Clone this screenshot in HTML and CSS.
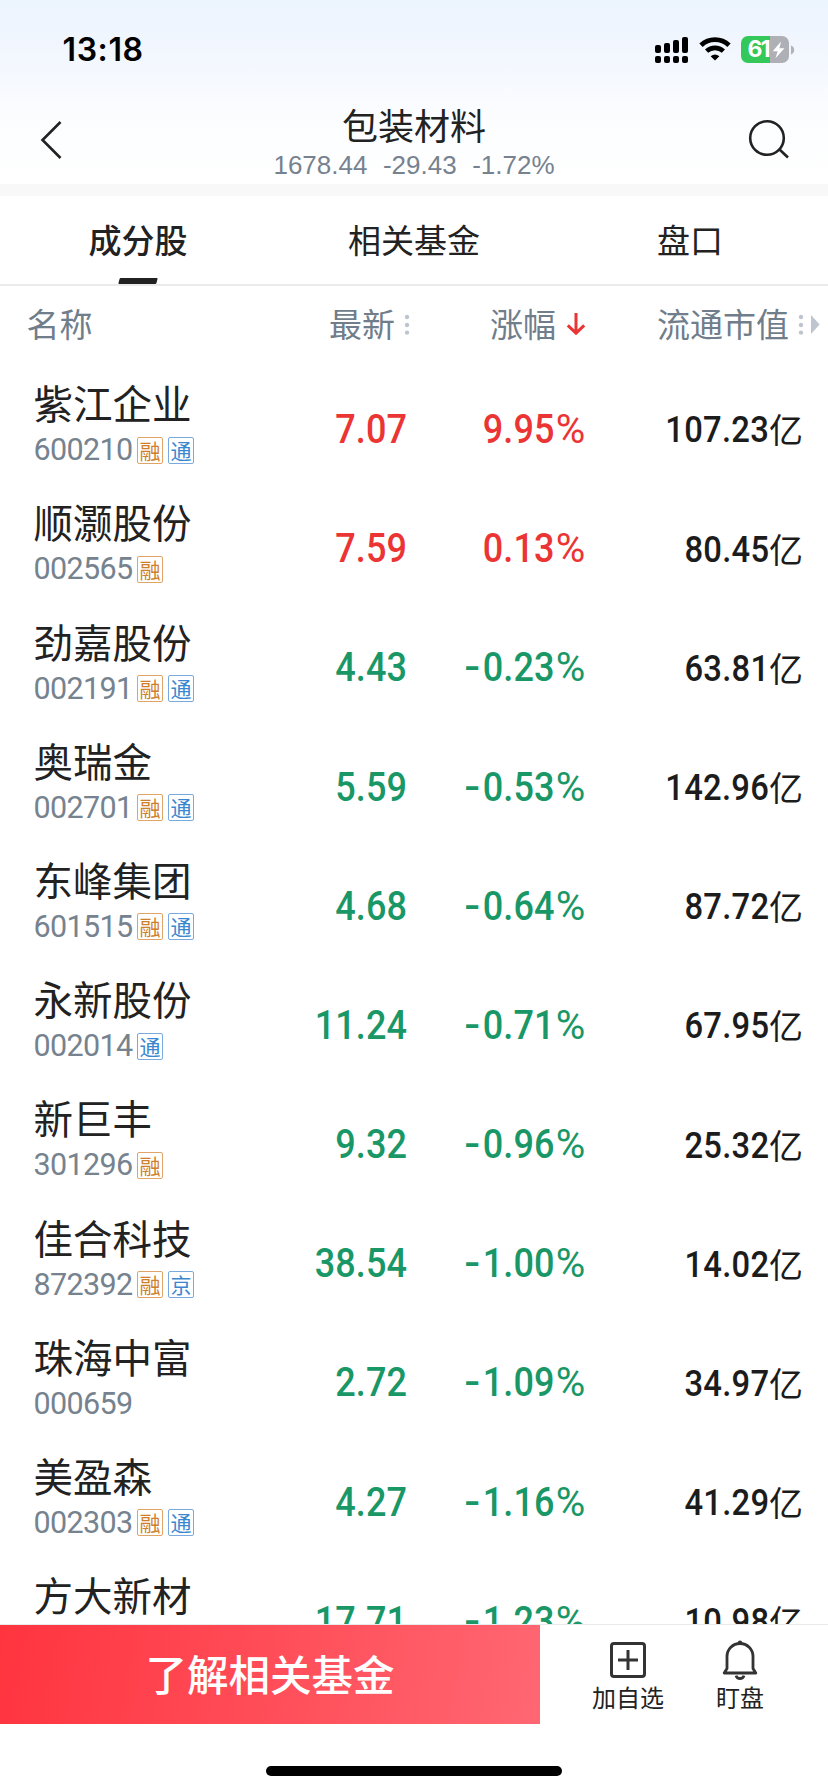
FILE: index.html
```html
<!DOCTYPE html>
<html lang="zh-CN">
<head>
<meta charset="utf-8">
<title>包装材料</title>
<link rel="stylesheet" href="styles.css">
</head>
<body>
<div class="app">
  <header class="top">
    <div class="status">
      <div class="time">13:18</div>
      <div class="status-icons">
        <svg class="signal" width="34" height="27" viewBox="0 0 34 27">
          <rect x="0" y="8" width="6" height="8" rx="2"/><rect x="9" y="6" width="6" height="10" rx="2"/><rect x="18" y="3" width="6" height="13" rx="2"/><rect x="27" y="0" width="6" height="16" rx="2"/>
          <rect x="0" y="19" width="6" height="7" rx="2"/><rect x="9" y="19" width="6" height="7" rx="2"/><rect x="18" y="19" width="6" height="7" rx="2"/><rect x="27" y="19" width="6" height="7" rx="2"/>
        </svg>
        <svg class="wifi" width="32" height="24" viewBox="0 0 32 24">
          <path d="M2 8.2A20.2 20.2 0 0 1 30 8.2" fill="none" stroke="#000" stroke-width="4.8"/>
          <path d="M7.6 14.2A12.2 12.2 0 0 1 24.4 14.2" fill="none" stroke="#000" stroke-width="4.6"/>
          <path d="M16 23.6L11.6 19.2Q16 15.6 20.4 19.2Z"/>
        </svg>
        <div class="battery">
          <span class="battery-level">61</span>
          <svg class="bolt" width="13" height="18" viewBox="0 0 12 18" preserveAspectRatio="none"><path d="M8.4 0.5L0.6 10.2H5.2L3.2 17.3L11.5 7.3H6.8Z" fill="#fff"/></svg>
        </div>
        <svg class="battery-tip" width="4" height="10" viewBox="0 0 4 10"><path d="M0 0.5Q3.2 1.6 3.2 5T0 9.5Z" fill="#b0b2b8"/></svg>
      </div>
    </div>
    <div class="nav">
      <svg class="back" width="24" height="40" viewBox="0 0 24 40"><path d="M20.5 2L2.5 20L20.5 38" fill="none" stroke="#222" stroke-width="2.6"/></svg>
      <div class="heading">
        <h1 class="title">包装材料</h1>
        <div class="quote"><span>1678.44</span><span>-29.43</span><span>-1.72%</span></div>
      </div>
      <svg class="search" width="42" height="42" viewBox="0 0 42 42"><g fill="none" stroke="#222" stroke-width="2.6"><circle cx="19" cy="19" r="16.8"/><path d="M31 30L40 38.5"/></g></svg>
    </div>
  </header>
  <nav class="tabs">
    <div class="tab tab-active">成分股</div>
    <div class="tab">相关基金</div>
    <div class="tab">盘口</div>
  </nav>
  <main class="table">
    <div class="thead">
      <div class="th th-name">名称</div>
      <div class="th">最新<svg class="dots" width="6" height="22" viewBox="0 0 6 22"><circle cx="3" cy="3" r="2.2"/><circle cx="3" cy="11" r="2.2"/><circle cx="3" cy="18.6" r="2.2"/></svg></div>
      <div class="th">涨幅<svg class="arrow" width="20" height="24" viewBox="0 0 20 24"><path d="M10 1V21M1.8 13.4L10 21.2L18.2 13.4" fill="none" stroke="#eb3434" stroke-width="3"/></svg></div>
      <div class="th">流通市值<svg class="dots" width="6" height="22" viewBox="0 0 6 22"><circle cx="3" cy="3" r="2.2"/><circle cx="3" cy="11" r="2.2"/><circle cx="3" cy="18.6" r="2.2"/></svg><svg class="more" width="9" height="19" viewBox="0 0 9 19"><path d="M0 0L8.6 9.5L0 19Z" fill="#bfc5ce"/></svg></div>
    </div>
    <div class="row up"><div class="stock"><div class="name">紫江企业</div><div class="meta"><span class="code">600210</span><i class="tag">融</i><i class="tag blue">通</i></div></div><div class="num">7.07</div><div class="num">9.95<span class="pct">%</span></div><div class="cap"><span class="amount">107.23</span>亿</div></div>
    <div class="row up"><div class="stock"><div class="name">顺灏股份</div><div class="meta"><span class="code">002565</span><i class="tag">融</i></div></div><div class="num">7.59</div><div class="num">0.13<span class="pct">%</span></div><div class="cap"><span class="amount">80.45</span>亿</div></div>
    <div class="row"><div class="stock"><div class="name">劲嘉股份</div><div class="meta"><span class="code">002191</span><i class="tag">融</i><i class="tag blue">通</i></div></div><div class="num">4.43</div><div class="num"><span class="minus">-</span>0.23<span class="pct">%</span></div><div class="cap"><span class="amount">63.81</span>亿</div></div>
    <div class="row"><div class="stock"><div class="name">奥瑞金</div><div class="meta"><span class="code">002701</span><i class="tag">融</i><i class="tag blue">通</i></div></div><div class="num">5.59</div><div class="num"><span class="minus">-</span>0.53<span class="pct">%</span></div><div class="cap"><span class="amount">142.96</span>亿</div></div>
    <div class="row"><div class="stock"><div class="name">东峰集团</div><div class="meta"><span class="code">601515</span><i class="tag">融</i><i class="tag blue">通</i></div></div><div class="num">4.68</div><div class="num"><span class="minus">-</span>0.64<span class="pct">%</span></div><div class="cap"><span class="amount">87.72</span>亿</div></div>
    <div class="row"><div class="stock"><div class="name">永新股份</div><div class="meta"><span class="code">002014</span><i class="tag blue">通</i></div></div><div class="num">11.24</div><div class="num"><span class="minus">-</span>0.71<span class="pct">%</span></div><div class="cap"><span class="amount">67.95</span>亿</div></div>
    <div class="row"><div class="stock"><div class="name">新巨丰</div><div class="meta"><span class="code">301296</span><i class="tag">融</i></div></div><div class="num">9.32</div><div class="num"><span class="minus">-</span>0.96<span class="pct">%</span></div><div class="cap"><span class="amount">25.32</span>亿</div></div>
    <div class="row"><div class="stock"><div class="name">佳合科技</div><div class="meta"><span class="code">872392</span><i class="tag">融</i><i class="tag blue">京</i></div></div><div class="num">38.54</div><div class="num"><span class="minus">-</span>1.00<span class="pct">%</span></div><div class="cap"><span class="amount">14.02</span>亿</div></div>
    <div class="row"><div class="stock"><div class="name">珠海中富</div><div class="meta"><span class="code">000659</span></div></div><div class="num">2.72</div><div class="num"><span class="minus">-</span>1.09<span class="pct">%</span></div><div class="cap"><span class="amount">34.97</span>亿</div></div>
    <div class="row"><div class="stock"><div class="name">美盈森</div><div class="meta"><span class="code">002303</span><i class="tag">融</i><i class="tag blue">通</i></div></div><div class="num">4.27</div><div class="num"><span class="minus">-</span>1.16<span class="pct">%</span></div><div class="cap"><span class="amount">41.29</span>亿</div></div>
    <div class="row"><div class="stock"><div class="name">方大新材</div><div class="meta"></div></div><div class="num">17.71</div><div class="num"><span class="minus">-</span>1.23<span class="pct">%</span></div><div class="cap"><span class="amount">10.98</span>亿</div></div>
  </main>
  <footer class="bottom">
    <div class="actions">
      <div class="cta">了解相关基金</div>
      <div class="action action-add">
        <svg width="42" height="42" viewBox="0 0 42 42"><g fill="none" stroke="#333" stroke-width="3"><rect x="4.5" y="4.5" width="33" height="33" rx="2.5"/><path d="M11 21H31M21 11V31"/></g></svg>
        <span>加自选</span>
      </div>
      <div class="action action-watch">
        <svg width="42" height="42" viewBox="0 0 42 42"><g fill="none" stroke="#333" stroke-width="2.8" stroke-linejoin="round"><path d="M5.2 34L8 29.5V17.5A13 13 0 0 1 34 17.5V29.5L36.8 34Z"/><path d="M17 36.6A4.2 4.2 0 0 0 25 36.6"/></g><circle cx="21" cy="3.6" r="2.2" fill="#333"/></svg>
        <span>盯盘</span>
      </div>
    </div>
    <div class="home"></div>
  </footer>
</div>
</body>
</html>
```
FILE: styles.css
```css
* { box-sizing: border-box; }
body { margin: 0; background: #fff; font-family: "Noto Sans CJK SC", sans-serif; color: #222; }
svg { display: block; flex: none; }
.app { width: 828px; height: 1792px; display: flex; flex-direction: column; overflow: hidden; }
.top { height: 196px; flex: none; background: linear-gradient(#ecf4fe 0, #f3f7fe 60px, #fcfdff 120px, #fff 180px); border-bottom: 12px solid #f8f8f8; }
.status { height: 96px; display: flex; justify-content: space-between; padding: 0 33px 0 62.5px; }
.time { font: 600 32px/40px "Inter", sans-serif; color: #000; padding-top: 30px; letter-spacing: 0.6px; }
.status-icons { display: flex; align-items: flex-start; padding-top: 36px; }
.signal { margin: 1px 10px 0 0; }
.wifi { margin: 1px 10px 0 0; }
.battery { width: 48px; height: 27px; border-radius: 7px; background: linear-gradient(90deg, #34c759 29px, #aeb0b6 29px); display: flex; align-items: center; padding-left: 6.5px; }
.battery-level { font: 700 23px/27px "Inter", sans-serif; color: #fff; letter-spacing: -1.8px; width: 24px; }
.battery-tip { margin: 9px 0 0 2px; }
.nav { height: 88px; display: flex; justify-content: space-between; padding: 0 38px 0 40px; }
.back { margin-top: 24px; }
.search { margin-top: 23px; }
.heading { text-align: center; margin-left: 16px; }
.title { margin: 7px 0 0; font-weight: 400; font-size: 36px; line-height: 42px; }
.quote { display: flex; gap: 15.5px; justify-content: center; font: 26px/30px "Liberation Sans", sans-serif; color: #76828f; padding-top: 5px; }
.tabs { height: 90px; flex: none; display: grid; grid-template-columns: repeat(3, 1fr); border-bottom: 2px solid #ebebeb; }
.tab { position: relative; text-align: center; font-size: 33px; line-height: 86px; }
.tab-active { font-weight: 500; }
.tab-active::after { content: ""; position: absolute; left: 119px; bottom: 0; width: 38px; height: 6px; background: #222; border-radius: 1px; transform: skewX(-15deg); }
.table { flex: 1; min-height: 0; overflow: hidden; }
.thead { display: grid; grid-template-columns: 140px 270px 176px 234px; height: 82.4px; color: #707d8b; font-size: 33px; }
.th { display: flex; align-items: center; justify-content: flex-end; height: 74px; white-space: nowrap; }
.th-name { justify-content: flex-start; padding-left: 26.5px; }
.dots { margin: 4px 0 0 9px; fill: #bfc5ce; }
.arrow { margin: 2px 0 0 10px; }
.more { margin: 3px 0 0 7px; }
.row { display: grid; grid-template-columns: 229px 178px 178px 218px; height: 119.2px; align-items: center; color: #199766; }
.up { color: #eb3434; }
.stock { padding-left: 33.5px; color: #222; white-space: nowrap; }
.name { font-size: 39.5px; line-height: 46px; margin-top: -4.5px; }
.meta { display: flex; align-items: center; height: 44px; margin-top: 3px; }
.code { font: 400 30.5px/44px Roboto, sans-serif; letter-spacing: -0.65px; color: #76838f; width: 103.5px; }
.tag { font-style: normal; font-size: 21px; line-height: 24px; width: 26px; height: 27px; text-align: center; border: 1px solid #e0a468; border-radius: 2px; color: #cf7f2b; margin-right: 5px; }
.blue { border-color: #78aadd; color: #3b87cf; }
.num { font: 500 40px/46px Roboto, sans-serif; letter-spacing: 0.1px; text-align: right; white-space: nowrap; padding-top: 4px; transform: scaleX(.9); transform-origin: right; }
.pct { font-weight: 400; display: inline-block; margin-left: 4.5px; transform: scaleX(1.12); transform-origin: right; }
.minus { display: inline-block; transform: scaleX(1.3); transform-origin: right; margin-right: 2.5px; }
.cap { color: #1c1c1c; font-size: 34px; line-height: 46px; display: flex; justify-content: flex-end; padding-top: 5px; }
.amount { font: 500 36px/48px Roboto, sans-serif; letter-spacing: 0.3px; transform: scaleX(.91); transform-origin: right; }
.bottom { height: 168px; flex: none; border-top: 1px solid #e9e9e9; display: flex; flex-direction: column; align-items: center; }
.actions { width: 828px; height: 99px; display: flex; margin-bottom: 42px; }
.cta { width: 540px; text-align: center; font-size: 41.5px; font-weight: 500; line-height: 97px; color: #fff; background: linear-gradient(100deg, #ff343f, #ff6772); }
.action { width: 112px; display: flex; flex-direction: column; align-items: center; font-size: 24px; line-height: 32px; padding-top: 14px; }
.action-add { margin-left: 32px; }
.home { width: 296px; height: 10px; border-radius: 5px; background: #000; }
```
